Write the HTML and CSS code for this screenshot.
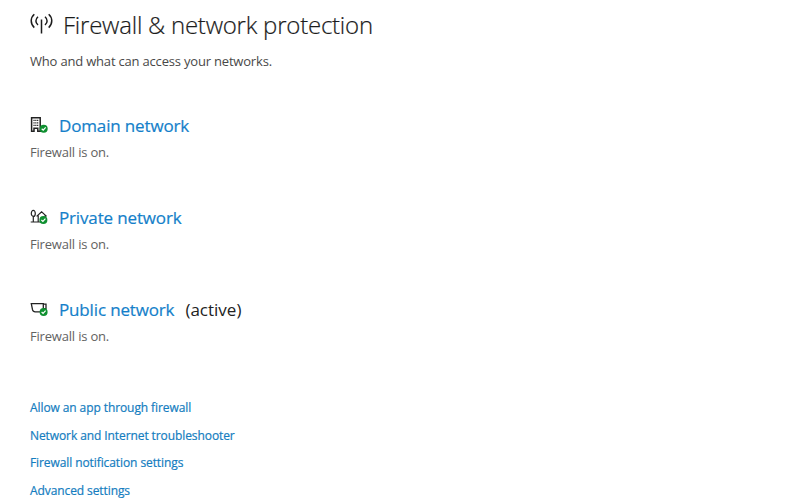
FILE: index.html
```html
<!DOCTYPE html>
<html lang="en">
<head>
<meta charset="utf-8">
<title>Firewall &amp; network protection</title>
<link rel="stylesheet" href="styles.css">
</head>
<body>
<main>
  <header>
    <h1>
      <svg class="signal" width="23" height="23" viewBox="0 0 23 23" fill="none" stroke="currentColor" stroke-width="1.5">
        <path d="M4.3 2.2C.2 5.8.2 11.8 4.3 15.6M18.7 2.2c4.1 3.6 4.1 9.6 0 13.4M8 4.8C5.2 7.2 5.2 10.6 8 13M15 4.8c2.8 2.4 2.8 5.8 0 8.2M11.5 7.5v14"/>
      </svg>
      <span>Firewall &amp; network protection</span>
    </h1>
    <p class="intro">Who and what can access your networks.</p>
  </header>

  <section class="network">
    <h2>
      <svg class="icon" width="18" height="18" viewBox="0 0 18 18">
        <path d="M1.6 1.7h8.6v13.6H7.8v-3H4v3H1.6z" fill="#fff" stroke="#222" stroke-width="1.5"/>
        <path d="M3.4 4.4h5M3.4 6.9h5M3.4 9.4h5" stroke="#333" stroke-width="1.4" stroke-dasharray="1.3 .5"/>
        <circle cx="13.7" cy="12.7" r="4" fill="#0f9030"/>
        <path d="M11.7 12.7l1.5 1.4 2.5-2.7" fill="none" stroke="#fff" stroke-width="1.2"/>
      </svg>
      <a>Domain network</a>
    </h2>
    <p>Firewall is on.</p>
  </section>

  <section class="network">
    <h2>
      <svg class="icon" width="18" height="18" viewBox="0 0 18 18">
        <g fill="none" stroke="#222" stroke-width="1.2">
          <ellipse cx="3.3" cy="5.4" rx="2" ry="3"/>
          <path d="M3.3 8.4v5.4M.7 14h11M6.6 8.4l5-4.7 5 4.7M8.2 7.4v6.4M15.1 7.4v3"/>
        </g>
        <circle cx="13.4" cy="12" r="4" fill="#0f9030"/>
        <path d="M11.4 12l1.5 1.4 2.5-2.7" fill="none" stroke="#fff" stroke-width="1.2"/>
      </svg>
      <a>Private network</a>
    </h2>
    <p>Firewall is on.</p>
  </section>

  <section class="network">
    <h2>
      <svg class="icon" width="18" height="18" viewBox="0 0 18 18">
        <g fill="none" stroke="#222" stroke-width="1.3">
          <path d="M1.3 3.7h12v5.2q0 3-3 3H5.2q-2.2 0-2.7-2.2z"/>
          <path d="M13.3 4.2H16v4.4h-2.7"/>
        </g>
        <circle cx="13.6" cy="12" r="4" fill="#0f9030"/>
        <path d="M11.6 12l1.5 1.4 2.5-2.7" fill="none" stroke="#fff" stroke-width="1.2"/>
      </svg>
      <a>Public network</a>
      <span class="status">(active)</span>
    </h2>
    <p>Firewall is on.</p>
  </section>

  <nav>
    <a>Allow an app through firewall</a>
    <a>Network and Internet troubleshooter</a>
    <a>Firewall notification settings</a>
    <a>Advanced settings</a>
  </nav>
</main>
</body>
</html>
```
FILE: styles.css
```css
* { box-sizing: border-box; margin: 0; padding: 0; }
body {
  width: 800px;
  height: 500px;
  overflow: hidden;
  background: #fff;
  color: #1c1c1c;
  font-family: "Open Sans", "Noto Sans", sans-serif;
}
main { padding: 6px 30px 0; }
header { height: 103px; }
h1 {
  display: flex;
  align-items: center;
  gap: 10px;
  height: 36px;
  font-size: 24px;
  font-weight: 300;
  letter-spacing: -0.23px;
  white-space: nowrap;
  -webkit-text-stroke: 0.2px;
}
.signal { flex: none; margin-top: -2px; }
.intro {
  margin-top: 9px;
  color: #484848;
  font-size: 13px;
  line-height: 20px;
  letter-spacing: -0.19px;
}
.network { height: 92px; }
h2 {
  display: flex;
  align-items: center;
  height: 32px;
  font-size: 17px;
  font-weight: 400;
  letter-spacing: -0.15px;
  white-space: nowrap;
}
h2 .icon { flex: none; margin-right: 11px; }
h2 a { color: #147fca; -webkit-text-stroke: 0.2px; }
.status { margin-left: 11px; color: #222; letter-spacing: 0; }
.network p {
  margin-top: 1.4px;
  color: #626262;
  font-size: 13px;
  line-height: 20px;
  letter-spacing: -0.19px;
}
nav { display: flex; flex-direction: column; padding-top: 9px; }
nav a {
  color: #147dc0;
  font-size: 12px;
  line-height: 27.6px;
  letter-spacing: -0.09px;
  -webkit-text-stroke: 0.2px;
}
```
